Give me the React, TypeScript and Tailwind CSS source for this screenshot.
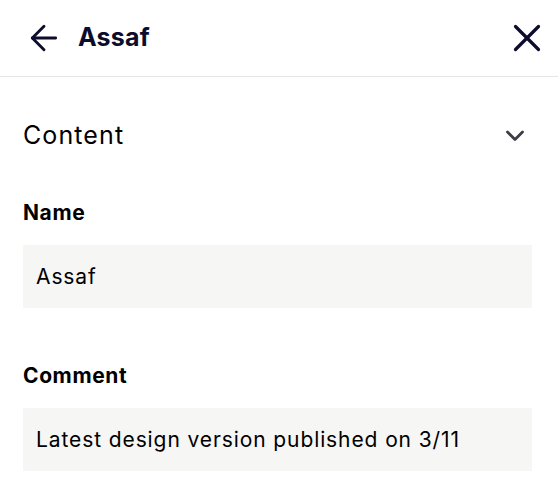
import { ArrowLeft, X } from 'lucide-react';

const FIELDS = [
  { label: 'Name', value: 'Assaf' },
  { label: 'Comment', value: 'Latest design version published on 3/11' },
];

export default function App() {
  return (
    <div className="w-[558px] h-[494px] bg-white overflow-hidden font-['Inter',sans-serif]">
      {/* Header */}
      <div className="h-[77px] flex items-center justify-between pl-[24px] pr-[8px] border-b border-[#e6e6e6]">
        <div className="flex items-center gap-[14px]">
          <ArrowLeft size={40} strokeWidth={1.7} className="text-[#0c0c2c]" />
          <h1 className="text-[25px] font-bold text-[#0c0c2c] tracking-[0.2px]">Assaf</h1>
        </div>
        <X size={46} strokeWidth={1.7} className="text-[#0c0c2c]" />
      </div>

      <div className="px-[23px] pt-[42px]">
        {/* Section */}
        <div className="flex items-center justify-between">
          <h2 className="text-[25px] text-black tracking-[1.1px] leading-[32px]">Content</h2>
          <svg width="20" height="14" viewBox="0 0 20 14" fill="none" className="mr-[10px] mt-[2px] text-[#3d3d48]">
            <polyline points="2.5,3 10,10.5 17.5,3" stroke="currentColor" strokeWidth="2.8" strokeLinecap="round" strokeLinejoin="round" />
          </svg>
        </div>

        <div className="mt-[50px] flex flex-col gap-[56px]">
          {FIELDS.map((f) => (
            <div key={f.label}>
              <label className="block text-[21px] font-bold text-black leading-[24px] tracking-[0.6px]">{f.label}</label>
              <div className="mt-[20px] h-[63px] bg-[#f6f6f5] flex items-center px-[13px] w-[509px]">
                <span className="text-[21px] text-black tracking-[0.9px]">{f.value}</span>
              </div>
            </div>
          ))}
        </div>
      </div>
    </div>
  );
}
